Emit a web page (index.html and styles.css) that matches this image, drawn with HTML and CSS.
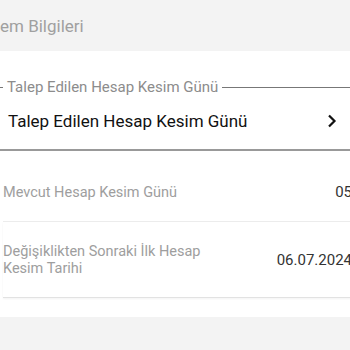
FILE: index.html
```html
<!DOCTYPE html>
<html lang="tr">
<head>
    <meta charset="UTF-8">
    <meta name="viewport" content="width=device-width, initial-scale=1.0">
    <title>Hesap Kesim Bilgileri</title>
    <link rel="stylesheet" href="styles.css">
</head>
<body>
    <div class="header">em Bilgileri</div>
    <div class="panel">
        <fieldset class="select-field">
            <legend>Talep Edilen Hesap Kesim Günü</legend>
            <div class="select-row">
                <span>Talep Edilen Hesap Kesim Günü</span>
                <svg class="chevron" width="10" height="14" viewBox="0 0 10 14">
                    <path d="M2 1.5 L7.5 7 L2 12.5" fill="none" stroke="#111" stroke-width="2.2"/>
                </svg>
            </div>
        </fieldset>
        <div class="rows">
            <div class="row">
                <div class="label">Mevcut Hesap Kesim Günü</div>
                <div class="value">05</div>
            </div>
            <div class="row last">
                <div class="label">Değişiklikten Sonraki İlk Hesap Kesim Tarihi</div>
                <div class="value">06.07.2024</div>
            </div>
        </div>
    </div>
</body>
</html>
```

FILE: styles.css
```css
body {
    margin: 0;
    overflow: hidden;
    font-family: Roboto, "Liberation Sans", sans-serif;
    background-color: #f3f3f3;
}
.header {
    height: 51px;
    display: flex;
    align-items: center;
    font-size: 17px;
    color: #a0a0a0;
}
.panel {
    background-color: #fff;
    padding: 28px 0 19px 3px;
    margin-right: -2px;
}
.select-field {
    margin: 0 -10px 0 -13px;
    padding: 0 12px;
    border: 1px solid #777;
    border-bottom: 2px solid #999;
    min-width: 0;
}
.select-field legend {
    padding: 0 4px;
    font-size: 15px;
    line-height: 16px;
    color: #8c8c8c;
}
.select-row {
    display: flex;
    align-items: center;
    justify-content: space-between;
    padding: 16px 12px 18px 5px;
    font-size: 17px;
    line-height: 20px;
    color: #111;
}
.chevron {
    display: block;
}
.rows {
    margin-top: 12px;
}
.row {
    display: flex;
    align-items: center;
    justify-content: space-between;
    padding: 21px 0 20px;
    font-size: 15px;
    line-height: 17px;
    border-bottom: 1px solid #ececec;
}
.row.last {
    border-bottom-color: #e2e2e2;
    box-shadow: 0 1px 2px rgba(0, 0, 0, 0.05);
}
.label {
    flex: 0 1 215px;
    font-size: 14.5px;
    color: #9e9e9e;
}
.value {
    color: #333;
}
```
